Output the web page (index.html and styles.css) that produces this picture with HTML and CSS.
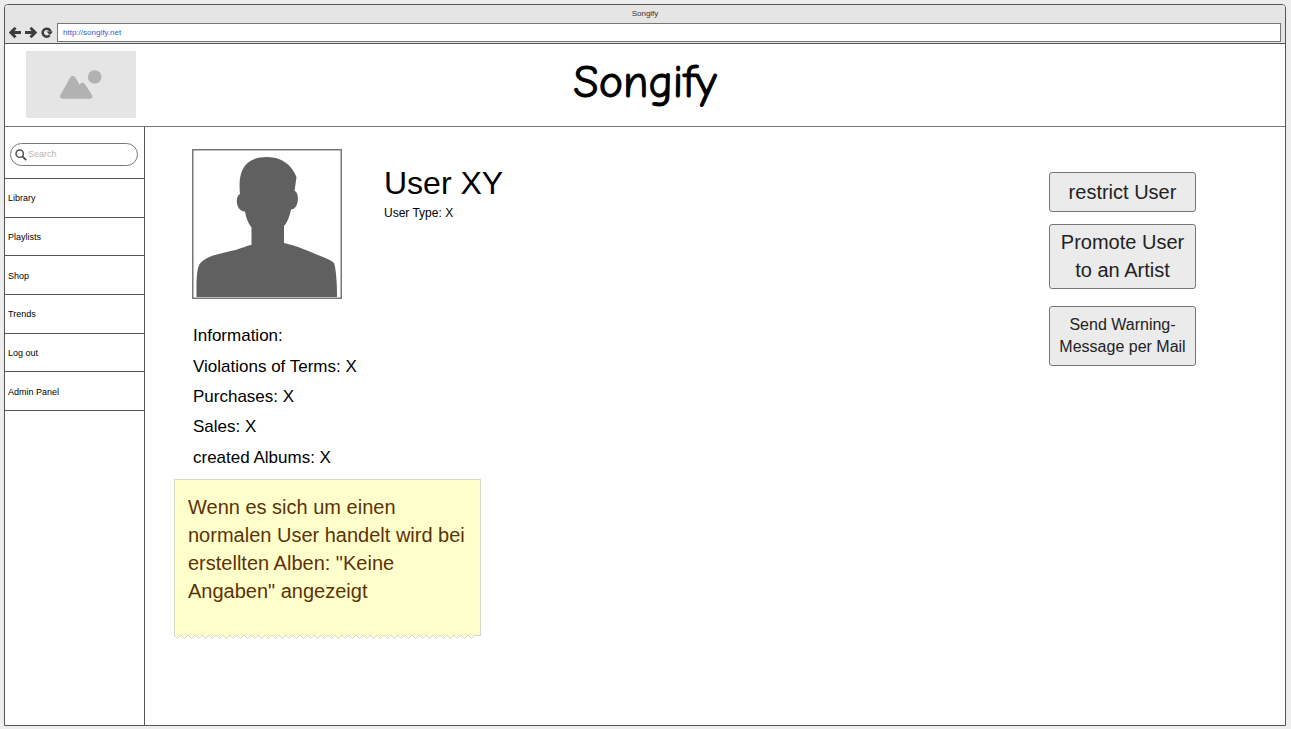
FILE: index.html
```html
<!DOCTYPE html>
<html lang="en">
<head>
<meta charset="utf-8">
<title>Songify</title>
<link rel="stylesheet" href="styles.css">
</head>
<body>
<div class="window">
  <div class="chrome">
    <div class="window-title">Songify</div>
    <div class="toolbar">
      <button class="nav-button" type="button" aria-label="Back">
        <svg width="12" height="12" viewBox="0 0 12 12"><path d="M6.500 .8 1.900 5.500l4.600 4.700M2.500 5.500H12" fill="none" stroke="#3d3d3d" stroke-width="2.900"/></svg>
      </button>
      <button class="nav-button" type="button" aria-label="Forward">
        <svg width="12" height="12" viewBox="0 0 12 12"><path d="M5.500 .8l4.600 4.700-4.600 4.700M9.500 5.500H0" fill="none" stroke="#3d3d3d" stroke-width="2.900"/></svg>
      </button>
      <button class="nav-button" type="button" aria-label="Reload">
        <svg width="12" height="12" viewBox="0 0 12 12"><path d="M8.600 8.400A4 4 0 1 1 9.500 4.500" fill="none" stroke="#3d3d3d" stroke-width="2.500"/><path d="M5.500 4.500H12L9 8z" fill="#3d3d3d"/></svg>
      </button>
      <input class="address" type="text" aria-label="Address" value="http://songify.net">
    </div>
  </div>
  <header class="header">
    <svg class="placeholder" width="110" height="67" viewBox="0 0 110 67" role="img" aria-label="Logo placeholder">
      <rect width="110" height="67" fill="#e5e5e5"/>
      <circle cx="68.700" cy="26" r="6.800" fill="#b2b2b2"/>
      <path d="M37 47.700c-2.500 0-3.600-2-2.400-4.200l9-16c1.500-3 4.500-3.300 6.200-.5l3.900 6.700c1.700-2.600 4-2.500 5.600 0l6.500 10c1.500 2.300.4 4-2 4z" fill="#b2b2b2"/>
    </svg>
    <h1 class="brand">Songify</h1>
  </header>
  <div class="layout">
    <aside class="sidebar">
      <form class="search" role="search">
        <label class="search-box">
          <svg width="12" height="12" viewBox="0 0 12 12" aria-hidden="true"><circle cx="4.700" cy="4.700" r="3.700" fill="none" stroke="#4a4a4a" stroke-width="1.400"/><path d="M7.400 7.400 11.200 11.200" stroke="#4a4a4a" stroke-width="1.800"/></svg>
          <input class="search-input" type="search" placeholder="Search" aria-label="Search">
        </label>
      </form>
      <nav class="menu">
        <a class="menu-item" href="#">Library</a>
        <a class="menu-item" href="#">Playlists</a>
        <a class="menu-item" href="#">Shop</a>
        <a class="menu-item" href="#">Trends</a>
        <a class="menu-item" href="#">Log out</a>
        <a class="menu-item" href="#">Admin Panel</a>
      </nav>
    </aside>
    <main class="content">
      <section class="profile">
        <div class="identity">
          <svg class="avatar" width="150" height="150" viewBox="0 0 150 150" role="img" aria-label="User picture">
            <rect x=".75" y=".75" width="148.500" height="148.500" fill="#fff" stroke="#777" stroke-width="1.500"/>
            <path d="M48 45C46 25 50 8 75 8c16 0 25 9 29.500 20L102.500 42c5 1 5 18-3.500 18.500-1.500 7-3.500 13-7 16.500V94c14 3 26 9 39 14 5 2 9 4 11 6 2 6 3 19 3 34H4.500c0-13-.5-29 4-34 7-8 23-10 35-13 6-2 11-4 16-5.300V78.500C56 74 54 69 53 62.500c-9 0-10.500-15-5-17.500z" fill="#606060"/>
          </svg>
          <div class="identity-text">
            <h2 class="user-name">User XY</h2>
            <p class="user-type">User Type: X</p>
          </div>
        </div>
        <div class="info">
          <p>Information:</p>
          <p>Violations of Terms: X</p>
          <p>Purchases: X</p>
          <p>Sales: X</p>
          <p>created Albums: X</p>
        </div>
        <div class="note">
          <p class="note-text">Wenn es sich um einen normalen User handelt wird bei erstellten Alben: "Keine Angaben" angezeigt</p>
          <svg class="note-edge" width="307" height="4" viewBox="0 0 307 4" aria-hidden="true">
            <defs><pattern id="teeth" width="7" height="4" patternUnits="userSpaceOnUse"><path d="M0 0 3.500 3.500 7 0z" fill="#ffffcb"/><path d="M0 0 3.500 3.500 7 0" fill="none" stroke="#d3d3c8"/></pattern></defs>
            <rect width="301" height="4" fill="url(#teeth)"/>
            <path d="M301 .5h6" stroke="#d3d3c8"/>
          </svg>
        </div>
      </section>
      <div class="actions">
        <button class="action" type="button">restrict User</button>
        <button class="action promote" type="button">Promote User<br>to an Artist</button>
        <button class="action warn" type="button">Send Warning-<br>Message per Mail</button>
      </div>
    </main>
  </div>
</div>
</body>
</html>
```
FILE: styles.css
```css
* {
  box-sizing: border-box;
}

body {
  margin: 0;
  padding: 4px 5px 3px 4px;
  min-height: 100vh;
  display: flex;
  background: #ededed;
  color: #000;
  font-family: "Liberation Sans", Arial, sans-serif;
}

h1, h2, p {
  margin: 0;
  font-weight: 400;
}

.window {
  flex: 1;
  display: flex;
  flex-direction: column;
  border: 1px solid #555;
  border-radius: 4px 4px 0 0;
  background: #fff;
}

.chrome {
  padding: 3px 4px 1px;
  background: #e5e5e5;
  border-bottom: 1px solid #555;
  border-radius: 3px 3px 0 0;
}

.window-title {
  font-size: 8px;
  line-height: 11px;
  padding-bottom: 4px;
  text-align: center;
  color: #333;
}

.toolbar {
  display: flex;
  align-items: center;
  gap: 4px;
}

.nav-button {
  display: flex;
  padding: 0;
  border: 0;
  background: none;
}

.address {
  flex: 1;
  height: 19px;
  padding: 0 5px;
  border: 1px solid #777;
  background: #fff;
  color: #2b62d9;
  font: 8px "Liberation Sans", Arial, sans-serif;
}

.header {
  display: grid;
  grid-template-columns: 1fr auto 1fr;
  align-items: center;
  padding: 7px 21px 8px;
  border-bottom: 1px solid #777;
}

.placeholder {
  display: block;
}

.brand {
  padding-bottom: 4px;
  font-family: "Coming Soon", "Comic Neue", "Patrick Hand", Lato, sans-serif;
  font-size: 46px;
  line-height: 60px;
  -webkit-text-stroke: 1px #000;
}

.layout {
  flex: 1;
  display: flex;
}

.sidebar {
  width: 140px;
  border-right: 1px solid #555;
}

.search {
  padding: 16px 6px 12px 5px;
}

.search-box {
  display: flex;
  align-items: center;
  height: 23px;
  padding: 0 4px;
  border: 1px solid #777;
  border-radius: 12px;
}

.search-input {
  flex: 1;
  min-width: 0;
  padding: 0 0 2px 1px;
  border: 0;
  outline: 0;
  background: none;
  font: 9px "Liberation Sans", Arial, sans-serif;
}

.search-input::placeholder {
  color: #b5b5b5;
}

.menu {
  display: grid;
  grid-auto-rows: 1fr;
  height: 233px;
  border-bottom: 1px solid #555;
}

.menu-item {
  display: flex;
  align-items: center;
  padding: 1px 0 0 3px;
  border-top: 1px solid #555;
  color: #000;
  font-size: 9px;
  text-decoration: none;
}

.content {
  flex: 1;
  display: flex;
  justify-content: space-between;
  align-items: flex-start;
  padding: 22px 89px 22px 29px;
}

.identity {
  display: flex;
  gap: 42px;
  padding-left: 18px;
}

.identity-text {
  padding-top: 16px;
}

.user-name {
  font-size: 32px;
  line-height: 36px;
}

.user-type {
  padding-top: 4px;
  font-size: 12px;
  line-height: 16px;
}

.info {
  display: grid;
  grid-auto-rows: 1fr;
  align-items: center;
  height: 180px;
  padding: 22px 19px 6px;
  font-size: 17px;
  line-height: 30px;
}

.note {
  width: 307px;
}

.note-text {
  padding: 13px 12px 30px 13px;
  border: 1px solid #d8d8ca;
  border-bottom: 0;
  background: #ffffcb;
  color: #5c3209;
  font-size: 20px;
  line-height: 28px;
}

.note-edge {
  display: block;
}

.actions {
  display: flex;
  flex-direction: column;
  padding-top: 23px;
}

.action {
  width: 147px;
  padding: 5px 0;
  border: 1px solid #777;
  border-radius: 3px;
  background: #ebebeb;
  color: #222;
  font: 20px/28px "Liberation Sans", Arial, sans-serif;
}

.promote {
  margin: 12px 0 17px;
  padding: 3px 0 4px;
}

.warn {
  padding: 7px 0;
  font-size: 16px;
  line-height: 22px;
}
```
